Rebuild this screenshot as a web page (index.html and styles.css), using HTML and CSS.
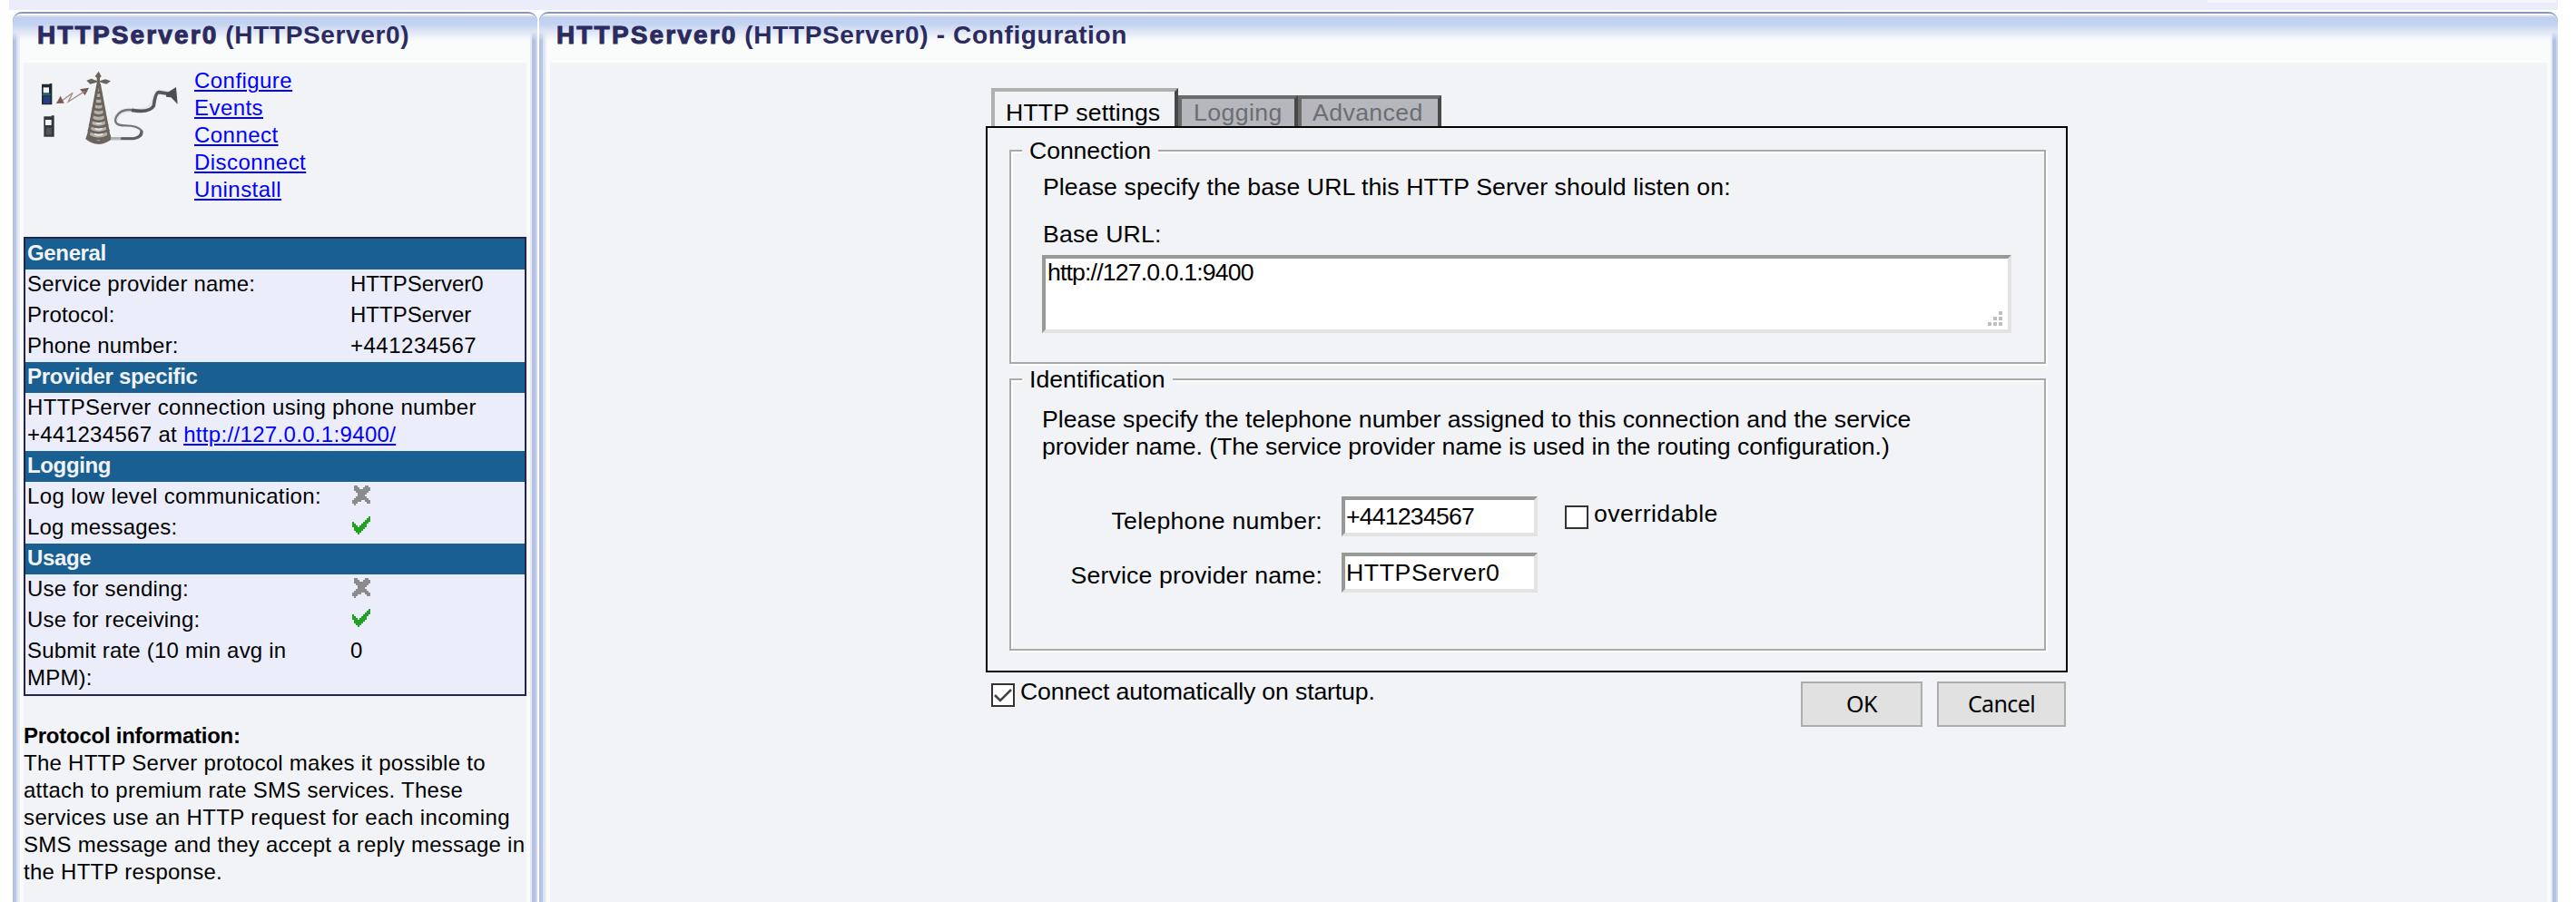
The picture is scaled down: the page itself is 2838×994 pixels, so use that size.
FILE: index.html
```html
<!DOCTYPE html>
<html lang="en">
<head>
<meta charset="utf-8">
<title>HTTPServer0 - Configuration</title>
<link rel="stylesheet" href="styles.css">
</head>
<body>
<div class="topbar"><div class="topbar-light"></div></div>
<div class="panels">
  <aside class="panel side">
    <h1 class="panel-title"><b class="name">HTTPServer0</b> <span class="rest">(HTTPServer0)</span></h1>
    <div class="panel-body">
      <div class="intro">
        <svg class="antenna" viewBox="0 0 540 330" width="180" height="110">
          <g fill="none" stroke="#d9dbde" stroke-width="16" opacity=".5"><path d="M290 188Q300 152 345 154Q405 164 418 125Q424 92 440 94L470 98"/></g>
          <g>
            <path d="M74 66h8v70H48V68h26z" fill="#1d2a35"/><path d="M53 79h19v18H53z" fill="#f5f6f8"/><path d="M50 99h27v7H50z" fill="#1f6b66"/><path d="M53 109h23v23H53z" fill="#263f83"/>
            <path d="M80 172h9v70H55v-67h25z" fill="#34383d"/><path d="M60 186h20v18H60z" fill="#f5f6f8"/><path d="M62 212h19v24H62z" fill="#50555b"/>
          </g>
          <g fill="#7b5852"><path d="M96 132l14-25 12 24z"/><path d="M204 80l-30 5 17 20z"/></g>
          <path d="M116 122L150 97L136 126L190 92" fill="none" stroke="#a68d89" stroke-width="4"/>
          <path d="M232 66h8l36 182-40 20-38-20z" fill="#b5b0aa"/>
          <g fill="none" stroke="#6b645e">
            <path d="M234 66L200 250M238 66L272 250" stroke-width="9"/>
            <path d="M227 92q9 9 18 0M224 110q12 11 24 0M220 128q16 13 32 0M217 146q19 15 38 0M213 164q23 17 46 0M209 182q27 19 54 0M205 200q31 21 62 0M201 218q35 23 70 0M198 236q38 25 76 0" stroke-width="8"/>
            <path d="M198 248q36 28 76 0l-4-8-34 22-35-20z" stroke-width="9"/>
          </g>
          <g fill="#e6e6e6"><path d="M224 212q12 5 24 0v6q-12 5-24 0zM222 230q14 6 28 0v6q-14 6-28 0zM226 194q10 4 20 0v5q-10 4-20 0z"/></g>
          <g fill="#6b645e"><path d="M230 58v-10l-6-6 12-16 9 16-5 6v18h-10z"/><path d="M230 62l-22 6-12-12 16-6 20 8zM242 62l20 6 14-10-18-6-20 6z"/></g>
          <path d="M276 248L350 248Q385 245 378 222Q365 205 325 205Q280 205 295 175Q310 148 350 154" fill="none" stroke="#72767b" stroke-width="7"/>
          <path d="M276 250h34" stroke="#b8babd" stroke-width="7"/>
          <path d="M310 248L352 248Q378 243 378 222" fill="none" stroke="#5b5f64" stroke-width="9"/>
          <path d="M345 154Q405 164 418 140Q424 94 436 95L472 101" fill="none" stroke="#55595d" stroke-width="11"/>
          <path d="M460 98l32-20 5 56-22-22-16-2z" fill="#4c4f52"/>
        </svg>
        <nav class="links">
          <a href="#">Configure</a><a href="#">Events</a><a href="#">Connect</a><a href="#">Disconnect</a><a href="#">Uninstall</a>
        </nav>
      </div>
      <div class="info">
        <h2>General</h2>
        <div class="row"><span>Service provider name:</span><span class="plain">HTTPServer0</span></div>
        <div class="row"><span>Protocol:</span><span class="plain">HTTPServer</span></div>
        <div class="row"><span>Phone number:</span><span class="number">+441234567</span></div>
        <h2>Provider specific</h2>
        <p class="text">HTTPServer connection using phone number<br>+441234567 at <a href="#">http://127.0.0.1:9400/</a></p>
        <h2>Logging</h2>
        <div class="row"><span class="wide">Log low level communication:</span><svg class="mark" viewBox="0 0 10 11"><path d="M1 0h2v1h1v1h2V1h1V0h2v1h1v2H9v1H8v1H7v1h1v1h1v1h1v2H8V9H7V8H5v1H3v1H2v1H1v-1H0V8h1V7h1V6h1V4H2V3H1z" fill="#8b8b8b"/></svg></div>
        <div class="row"><span>Log messages:</span><svg class="mark" viewBox="0 0 10 11"><path d="M9 0h1v3H9v1H8v2H7v1H6v1H5v1H4v1H3V9H2V8H1V6H0V3h1v1h1v1h1v1h1V5h1V4h1V3h1V2h1V1h1z" fill="#1fa31f"/></svg></div>
        <h2>Usage</h2>
        <div class="row"><span>Use for sending:</span><svg class="mark" viewBox="0 0 10 11"><path d="M1 0h2v1h1v1h2V1h1V0h2v1h1v2H9v1H8v1H7v1h1v1h1v1h1v2H8V9H7V8H5v1H3v1H2v1H1v-1H0V8h1V7h1V6h1V4H2V3H1z" fill="#8b8b8b"/></svg></div>
        <div class="row"><span>Use for receiving:</span><svg class="mark" viewBox="0 0 10 11"><path d="M9 0h1v3H9v1H8v2H7v1H6v1H5v1H4v1H3V9H2V8H1V6H0V3h1v1h1v1h1v1h1V5h1V4h1V3h1V2h1V1h1z" fill="#1fa31f"/></svg></div>
        <div class="row"><span>Submit rate (10 min avg in<br>MPM):</span><span>0</span></div>
      </div>
      <div class="about">
        <b>Protocol information:</b>
        <p>The HTTP Server protocol makes it possible to<br>attach to premium rate SMS services. These<br><span class="wide">services use an HTTP request for each incoming</span><br>SMS message and they accept a reply message in<br>the HTTP response.</p>
      </div>
    </div>
  </aside>
  <main class="panel content">
    <h1 class="panel-title"><b class="name">HTTPServer0</b> <span class="rest">(HTTPServer0) - Configuration</span></h1>
    <div class="panel-body">
      <form class="config">
        <div class="tabs">
          <div class="tab active">HTTP settings</div><div class="tab logging">Logging</div><div class="tab advanced">Advanced</div>
        </div>
        <div class="box">
          <fieldset class="connection">
            <legend>Connection</legend>
            <p>Please specify the base URL this HTTP Server should listen on:</p>
            <label class="url-label">Base URL:</label>
            <div class="url">
              <textarea class="field">http://127.0.0.1:9400</textarea>
              <svg class="grip" viewBox="0 0 16 16" width="16" height="16"><path d="M12 0h4v4h-4zM6 6h4v4H6zM12 6h4v4h-4zM0 12h4v4H0zM6 12h4v4H6zM12 12h4v4h-4z" fill="#bfbfbf"/></svg>
            </div>
          </fieldset>
          <fieldset class="identification">
            <legend>Identification</legend>
            <p>Please specify the telephone number assigned to this connection and the service<br><span class="tight">provider name. (The service provider name is used in the routing configuration.)</span></p>
            <div class="grid">
              <label class="phone-label">Telephone number:</label>
              <input class="field phone" value="+441234567">
              <label class="override"><span class="check"></span>overridable</label>
              <label class="provider-label">Service provider name:</label>
              <input class="field provider" value="HTTPServer0">
            </div>
          </fieldset>
        </div>
        <div class="footer">
          <label class="auto"><span class="check"><svg viewBox="0 0 22 22" width="22" height="22"><path d="M2 11l6 6L20 5" fill="none" stroke="#444" stroke-width="2.6"/></svg></span>Connect automatically on startup.</label>
          <button type="button" class="ok">OK</button>
          <button type="button" class="cancel">Cancel</button>
        </div>
      </form>
    </div>
  </main>
</div>
</body>
</html>
```
FILE: styles.css
```css
* { box-sizing: border-box; }
body { margin: 0; height: 994px; overflow: hidden; background: #fff; color: #000; font: 24px/30px "Liberation Sans", Arial, sans-serif; }
p, h1, h2 { margin: 0; }
a { color: #00f; text-decoration: underline; text-decoration-thickness: 2px; text-underline-offset: 2px; }

.topbar { width: 2808px; height: 11px; margin-left: 10px; background: #ebedfa; display: flex; justify-content: flex-end; padding-right: 2px; }
.topbar-light { width: 384px; height: 3px; background: #f6f7fd; }

.panels { display: flex; gap: 2px; margin: 2px 0 0 14px; height: 981px; }
.panel {
  border-top: 2px solid #8795c9;
  border-radius: 10px 10px 0 0;
  padding: 0 12px;
  background:
    linear-gradient(#fff 0 2px, #d3d9ee 2px 4px, #bdcff0 4px, #c3d2f1 11px, #dfe6f5 20px, rgba(250,251,251,0) 30px),
    linear-gradient(to right, #b4c1e2 0 2px, #b9c6e5 2px 4px, #dae1f2 4px 6px, #ebeef7 6px 8px, #fafbfb 8px calc(100% - 8px), #e6eaf4 calc(100% - 8px) calc(100% - 6px), #b4c1e2 calc(100% - 6px) calc(100% - 2px), #cad4eb calc(100% - 2px));
}
.side { width: 578px; }
.content { width: 2224px; }
.panel-title { height: 54px; padding: 8px 0 0 15px; font-size: 28px; line-height: 32px; color: #2b2b60; white-space: nowrap; }
.content .panel-title { padding-left: 7px; }
.name { letter-spacing: 2.15px; -webkit-text-stroke: 1px #2b2b60; }
.rest { letter-spacing: .65px; }
.panel-body { height: 925px; background: #f1f3f7; }

.intro { display: flex; height: 192px; }
.antenna { margin: 1px 4px 0; flex: none; }
.links { display: flex; flex-direction: column; align-items: flex-start; padding-top: 5px; letter-spacing: .45px; }

.info { border: 2px solid #24244d; background: #ebedfa; }
.info h2 { height: 34px; padding: 0 2px; background: #195f91; color: #f1f3f7; font-size: 24px; line-height: 31px; letter-spacing: -.35px; }
.row { display: grid; grid-template-columns: 356px 1fr; padding: 1px 0 3px 2px; white-space: nowrap; letter-spacing: .2px; }
.plain { letter-spacing: 0; }
.number { letter-spacing: .5px; }
.wide { letter-spacing: .38px; }
.mark { width: 20px; height: 22px; margin: 3px 0 0 2px; }
.text { padding: 1px 2px 3px; white-space: nowrap; letter-spacing: .33px; }
.about { padding-top: 29px; white-space: nowrap; }
.about b { letter-spacing: -.25px; }
.about p { letter-spacing: .26px; }

.config { width: 1192px; margin-left: 480px; padding-top: 28px; font-size: 26.67px; white-space: nowrap; }
.tabs { display: flex; align-items: flex-end; height: 42px; padding-left: 6px; }
.tab { height: 34px; border: 4px solid #6b6b6b; border-right-color: #484848; border-bottom: 0; background: #b5b7bc; color: #6d6d72; padding: 0 0 0 13px; letter-spacing: .4px; }
.active { width: 206px; height: 42px; border-color: #b0b0b0; border-right-color: #484848; background: #f1f3f7; color: #000; padding: 8px 0 0 12px; letter-spacing: .15px; }
.logging { width: 132px; }
.advanced { width: 158px; padding-left: 12px; }

.box { height: 602px; border: 2px solid #000; padding: 10px 22px 0 24px; }
fieldset { margin: 0 0 2px; padding: 0 0 0 34px; min-width: 0; border: 2px solid #a9aba8; box-shadow: 2px 2px 0 #fff, inset 2px 2px 0 #fff; }
legend { height: 30px; margin-left: -22px; padding: 0 8px; background: #f1f3f7; }
.connection { height: 250px; }
.connection legend { letter-spacing: -.1px; }
.identification { height: 314px; }
.connection p { padding: 10px 0 22px 1px; letter-spacing: .08px; }
.url-label { display: block; padding-left: 1px; letter-spacing: .2px; }
.url { position: relative; width: 1068px; height: 86px; margin-top: 8px; }
.field { display: block; margin: 0; border: 4px solid; border-color: #979997 #e3e3e3 #e3e3e3 #979997; border-radius: 0; outline: 0; background: #fff; color: #000; font: 26.67px/30px "Liberation Sans", Arial, sans-serif; padding: 2px 1px; }
textarea.field { width: 100%; height: 100%; padding: 0 2px; resize: none; overflow: hidden; letter-spacing: -.85px; }
.grip { position: absolute; right: 10px; bottom: 8px; }
.identification p { padding: 14px 0 40px; letter-spacing: .02px; }
.identification .tight { letter-spacing: -.07px; }
.grid { display: grid; grid-template-columns: 310px 216px 200px; column-gap: 20px; row-gap: 18px; align-items: start; }
.phone-label, .provider-label { text-align: right; padding: 12px 1px 0 0; letter-spacing: .25px; }
.provider-label { padding-top: 10px; letter-spacing: .15px; }
input.field { width: 216px; height: 44px; line-height: 30px; }
.field.phone { letter-spacing: -.8px; }
.field.provider { letter-spacing: .6px; }
.override, .auto { display: flex; }
.override { padding: 4px 0 0 10px; gap: 6px; letter-spacing: .45px; }
.check { flex: none; width: 26px; height: 26px; margin-top: 6px; border: 2px solid #333; background: #fff; }
.check svg { display: block; }
.footer { display: flex; align-items: flex-start; padding: 6px 2px 0 6px; }
.auto { gap: 6px; margin-right: auto; letter-spacing: -.15px; }
button { height: 50px; margin: 4px 0 0; padding: 0 0 2px; border: 2px solid #adadad; border-radius: 0; background: #e1e1e1; color: #000; font: 25px/30px "Noto Sans", sans-serif; letter-spacing: -.6px; }
.ok { width: 134px; }
.cancel { width: 142px; margin-left: 16px; }
```
